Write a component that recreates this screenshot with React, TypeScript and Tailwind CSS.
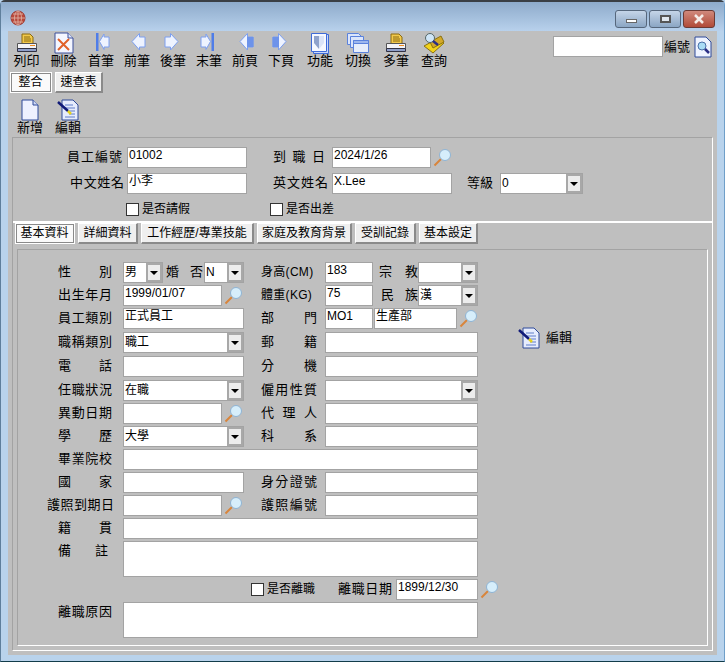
import type { ReactNode } from "react";

const Printer = () => (
  <svg width="24" height="22" viewBox="0 0 24 22">
    <path d="M7 2h8l3 3v7H7z" fill="#f2c94c" stroke="#8a6a10" />
    <path d="M9 5h6M9 7h7M9 9h7" stroke="#8a6a10" />
    <path d="M2.500 11.500h19v5h-19z" fill="#f4f4f8" stroke="#555" />
    <path d="M2.500 16.500h19v3h-19z" fill="#8f9fca" stroke="#334" />
    <path d="M15 13.500h5" stroke="#f08a1d" />
  </svg>
);

const Trash = () => (
  <svg width="20" height="22" viewBox="0 0 20 22">
    <path d="M1 1h13l5 5v15H1z" fill="#f4f6ff" stroke="#3a4f9a" />
    <path d="M14 1v5h5" fill="#dfe6fa" stroke="#3a4f9a" />
    <path d="M4 7l11 11M15 7L4 18" stroke="#e0602a" strokeWidth="2" />
  </svg>
);

const Arrow = ({ flip, bar, solid }: { flip?: boolean; bar?: boolean; solid?: boolean }) => (
  <svg width="18" height="22" viewBox="0 0 18 22" className={flip ? "-scale-x-100" : ""}>
    {bar && <rect x="4" y="1" width="2.500" height="18" fill="#4f7de8" />}
    {bar ? (
      <path d="M7.500 9.500L12 2V5H17V15H12V17.500Z" fill="#eef3ff" stroke="#7c9ff0" />
    ) : (
      <path d="M4 9.500L11.500 1.500V5H17V15H11.500V18Z" fill="#eef3ff" stroke="#7c9ff0" />
    )}
    {solid && <rect x="11" y="5" width="6.500" height="10" fill="#6d93ea" />}
  </svg>
);

const Func = () => (
  <svg width="20" height="22" viewBox="0 0 20 22">
    <path d="M3.500 2.500h15v19h-15z" fill="#c9d8fb" stroke="#3f6bd8" />
    <path d="M1.500 1.500h15v18h-15z" fill="#f6f8ff" stroke="#3f6bd8" />
    <path d="M4 4h5v13l-5-6z" fill="#8fa2cc" />
    <path d="M9 4h5v7l-5 6z" fill="#dbe4f8" />
  </svg>
);

const Switch = () => (
  <svg width="24" height="22" viewBox="0 0 24 22">
    <path d="M1.500 1.500h11l3 3v8h-14z" fill="#dbe5fb" stroke="#5b82dc" />
    <path d="M4.500 4.500h13v11h-13z" fill="#dbe5fb" stroke="#5b82dc" />
    <path d="M7.500 8.500h15v12h-15z" fill="#e6edfb" stroke="#5b82dc" />
    <path d="M7.500 8.500h15v3h-15z" fill="#9db7ee" stroke="#5b82dc" />
  </svg>
);

const Query = () => (
  <svg width="22" height="22" viewBox="0 0 22 22">
    <path d="M1 14L14 7l7 4-11 10z" fill="#f2d21a" stroke="#8a7210" />
    <path d="M7 10l11-6 3 6-11 6z" fill="#d4a92a" stroke="#8a7210" />
    <circle cx="7" cy="6" r="4.500" fill="#cfe6f8" stroke="#566" />
    <path d="M10 9l5 4" stroke="#2b2f86" strokeWidth="2.500" />
  </svg>
);

const NewDoc = () => (
  <svg width="18" height="22" viewBox="0 0 18 22">
    <path d="M1 1h11l5 5v15H1z" fill="#eef1ff" stroke="#2e4a9a" />
    <path d="M12 1v5h5" fill="#cfd8f4" stroke="#2e4a9a" />
  </svg>
);

const EditDoc = () => (
  <svg width="22" height="22" viewBox="0 0 22 22">
    <path d="M5 1h11l5 5v15H5z" fill="#e6ecfd" stroke="#2e4a9a" />
    <path d="M8 6h8M8 9h10M10 12h8M12 15h6M8 18h10" stroke="#5f7cc8" />
    <path d="M1 3l10 9" stroke="#101a78" strokeWidth="2.500" />
    <path d="M11 12l3 3" stroke="#e6d21a" strokeWidth="2.500" />
  </svg>
);

const Lens = () => (
  <svg width="18" height="20" viewBox="0 0 18 20" className="shrink-0">
    <path d="M1.500 18.500L8 12" stroke="#d9853b" strokeWidth="2" />
    <circle cx="12" cy="8" r="5.500" fill="#d6eefb" stroke="#8fb4d4" />
  </svg>
);

const SearchDoc = () => (
  <svg width="18" height="22" viewBox="0 0 18 22">
    <path d="M1 1h11l5 5v15H1z" fill="#eef3ff" stroke="#2e4a9a" />
    <circle cx="8" cy="10" r="4" fill="#a9dcf5" stroke="#4a6fa8" />
    <path d="M11 13l4 4" stroke="#2b2f86" strokeWidth="2.500" />
  </svg>
);

const Globe = () => (
  <svg width="16" height="16" viewBox="0 0 16 16">
    <circle cx="8" cy="8" r="7" fill="#b9483a" stroke="#a03a30" />
    <path d="M1 8h14M8 1v14M3 4h10M3 12h10" stroke="#dba698" />
    <ellipse cx="8" cy="8" rx="3.500" ry="7" fill="none" stroke="#dba698" />
  </svg>
);

const tools = [
  { label: "列印", icon: <Printer />, cls: "w-[37px]" },
  { label: "刪除", icon: <Trash />, cls: "w-[37px] mr-[1px]" },
  { label: "首筆", icon: <Arrow bar />, cls: "w-[36px]" },
  { label: "前筆", icon: <Arrow />, cls: "w-[36px]" },
  { label: "後筆", icon: <Arrow flip />, cls: "w-[36px]" },
  { label: "末筆", icon: <Arrow flip bar />, cls: "w-[36px]" },
  { label: "前頁", icon: <Arrow solid />, cls: "w-[36px]" },
  { label: "下頁", icon: <Arrow flip solid />, cls: "w-[36px] mr-[2px]" },
  { label: "功能", icon: <Func />, cls: "w-[38px]" },
  { label: "切換", icon: <Switch />, cls: "w-[38px]" },
  { label: "多筆", icon: <Printer />, cls: "w-[38px]" },
  { label: "查詢", icon: <Query />, cls: "w-[38px]" },
];

const Tool = ({ label, icon, className = "" }: { label: string; icon: ReactNode; className?: string }) => (
  <div className={"flex flex-col items-center " + className}>
    <div className="flex h-[22px] items-center justify-center">{icon}</div>
    <span className="text-[13px] leading-[14px] whitespace-nowrap">{label}</span>
  </div>
);

const Label = ({ text, className = "" }: { text: string; className?: string }) => (
  <span className={"flex shrink-0 justify-between text-[13px] leading-[20px] " + className}>
    {[...text].map((c, i) => (
      <span key={i}>{c}</span>
    ))}
  </span>
);

const Input = ({ value = "", className = "" }: { value?: string; className?: string }) => (
  <div className={"shrink-0 overflow-hidden border border-[#a3a3a3] bg-white pl-[1px] text-[12px] leading-[14px] whitespace-nowrap " + className}>
    {value}
  </div>
);

const Combo = ({ value = "", className = "" }: { value?: string; className?: string }) => (
  <div className={"flex shrink-0 border border-[#a3a3a3] bg-white " + className}>
    <span className="flex-1 overflow-hidden pl-[1px] text-[12px] leading-[18px]">{value}</span>
    <span className="flex w-[16px] items-center justify-center border-[2px] border-[#a8a8a8] bg-[#ececec]">
      <span className="border-x-[4px] border-t-[4px] border-x-transparent border-t-black" />
    </span>
  </div>
);

const Check = ({ label }: { label: string }) => (
  <div className="flex items-center gap-[3px]">
    <span className="h-[13px] w-[13px] border border-[#333] bg-white" />
    <span className="text-[12px] leading-[15px]">{label}</span>
  </div>
);

const Tab = ({ label, active, className = "" }: { label: string; active?: boolean; className?: string }) => (
  <div
    className={
      "flex h-[21px] items-center justify-center border-t border-l border-white border-r-2 border-b-2 text-[12px] whitespace-nowrap " +
      (active ? "border-r-white border-b-white bg-[#fafafa] outline outline-[#8a8a8a] -outline-offset-2 " : "border-r-[#8a8a8a] border-b-[#8a8a8a] bg-[#efefef] ") +
      className
    }
  >
    {label}
  </div>
);

// one form row: left part, then right part starting at x=261
const Row = ({ label, left, right, className = "" }: { label: string; left: ReactNode; right?: ReactNode; className?: string }) => (
  <div className={"flex h-[21px] " + className}>
    <div className="flex w-[214px] shrink-0">
      <div className="w-[76px] shrink-0 pl-[11px]">
        <Label text={label} className="w-[54px]" />
      </div>
      {left}
    </div>
    {right}
  </div>
);

const RightLabel = ({ text, className = "w-[56px]" }: { text: string; className?: string }) => (
  <div className="w-[64px] shrink-0">
    <Label text={text} className={className} />
  </div>
);

const App = () => {
  return (
    <div className="h-[662px] w-[725px] overflow-hidden bg-[#b9d3ec] font-['Liberation_Sans','Noto_Sans_CJK_TC',sans-serif] text-black">
      <div className="flex h-full flex-col rounded-t-[5px] border-t-2 border-r border-b border-l border-t-[#3a3f45] border-r-[#6f9fc9] border-b-[#123c4a] border-l-[#5f7f9c]">
        {/* title bar */}
        <div className="flex h-[29px] shrink-0 items-start justify-between bg-gradient-to-b from-[#8eabcb] to-[#b8d1ec] pt-[8px] pr-[9px] pl-[9px]">
          <Globe />
          <div className="flex gap-[2px]">
            <div className="flex h-[18px] w-[32px] items-center justify-center rounded-[3px] border border-[#56677c] bg-gradient-to-b from-[#c5d5e8] to-[#8ba6c4]">
              <span className="mt-[3px] h-[4px] w-[11px] border border-[#666] bg-white" />
            </div>
            <div className="flex h-[18px] w-[32px] items-center justify-center rounded-[3px] border border-[#56677c] bg-gradient-to-b from-[#c5d5e8] to-[#8ba6c4]">
              <span className="h-[8px] w-[11px] border-2 border-[#555] bg-[#dfe6ee]" />
            </div>
            <div className="flex h-[18px] w-[32px] items-center justify-center rounded-[3px] border border-[#6b3a34] bg-gradient-to-b from-[#d0897c] to-[#b04a38]">
              <svg width="12" height="10" viewBox="0 0 12 10">
                <path d="M2 1l8 8M10 1L2 9" stroke="#f4ece8" strokeWidth="2.500" />
              </svg>
            </div>
          </div>
        </div>

        {/* client area */}
        <div className="mx-[7px] flex flex-1 flex-col bg-[#bfbfbf]">
          <div className="flex h-[40px] shrink-0 items-start pt-[1px]">
            {tools.map((t) => (
              <Tool key={t.label} label={t.label} icon={t.icon} className={t.cls} />
            ))}
            <div className="ml-[100px] flex items-start pt-[4px]">
              <Input className="h-[21px] w-[110px]" />
              <span className="ml-[1px] text-[13px] leading-[22px]">編號</span>
              <span className="ml-[4px]">
                <SearchDoc />
              </span>
            </div>
          </div>

          <div className="flex h-[22px] shrink-0 items-center gap-[3px] pl-[2px]">
            <Tab label="整合" active className="w-[42px]" />
            <Tab label="速查表" className="w-[48px]" />
          </div>

          <div className="flex h-[44px] shrink-0 pt-[6px] pl-[2px]">
            <Tool label="新增" icon={<NewDoc />} className="w-[40px]" />
            <Tool label="編輯" icon={<EditDoc />} className="w-[36px]" />
          </div>

          {/* outer group */}
          <div className="mx-[4px] mb-[4px] flex flex-1 flex-col border-t border-r border-b border-l border-t-[#a3a3a3] border-r-white border-b-white border-l-[#a3a3a3]">
            <div className="flex h-[83px] shrink-0 flex-col pt-[9px]">
              <div className="flex h-[21px]">
                <Label text="員工編號" className="ml-[54px] w-[55px]" />
                <Input value="01002" className="ml-[5px] w-[120px]" />
                <Label text="到職日" className="ml-[26px] w-[52px]" />
                <Input value="2024/1/26" className="ml-[7px] w-[99px]" />
                <span className="ml-[2px]">
                  <Lens />
                </span>
              </div>
              <div className="mt-[5px] flex h-[21px]">
                <Label text="中文姓名" className="ml-[57px] w-[54px]" />
                <Input value="小李" className="ml-[3px] w-[120px]" />
                <Label text="英文姓名" className="ml-[26px] w-[55px]" />
                <Input value="X.Lee" className="ml-[4px] w-[120px]" />
                <Label text="等級" className="ml-[15px] w-[26px]" />
                <Combo value="0" className="ml-[7px] w-[83px]" />
              </div>
              <div className="mt-[8px] flex">
                <div className="ml-[113px] w-[144px]">
                  <Check label="是否請假" />
                </div>
                <Check label="是否出差" />
              </div>
            </div>
            <div className="h-[2px] shrink-0 bg-white" />
            <div className="flex h-[26px] shrink-0 items-start gap-[3px] pl-[2px]">
              <Tab label="基本資料" active className="w-[60px]" />
              <Tab label="詳細資料" className="w-[60px]" />
              <Tab label="工作經歷/專業技能" className="w-[113px]" />
              <Tab label="家庭及教育背景" className="w-[95px]" />
              <Tab label="受訓記錄" className="w-[61px]" />
              <Tab label="基本設定" className="w-[59px]" />
            </div>

            {/* inner group */}
            <div className="mx-[4px] mb-[4px] flex flex-1 border-t border-r border-b border-l border-t-[#a3a3a3] border-r-white border-b-white border-l-[#a3a3a3] pt-[12px] pl-[29px]">
              <div className="flex w-[462px] shrink-0 flex-col gap-[2px]">
                <Row
                  label="性別"
                  left={
                    <>
                      <Combo value="男" className="w-[40px]" />
                      <Label text="婚否" className="ml-[3px] w-[37px]" />
                      <Combo value="N" className="ml-[1px] w-[40px]" />
                    </>
                  }
                  right={
                    <>
                      <div className="w-[64px] shrink-0 text-[12px] leading-[20px] tracking-[0.3px]">身高(CM)</div>
                      <Input value="183" className="w-[48px]" />
                      <Label text="宗教" className="ml-[6px] w-[39px]" />
                      <Combo className="w-[60px]" />
                    </>
                  }
                />
                <Row
                  label="出生年月"
                  left={
                    <>
                      <Input value="1999/01/07" className="w-[99px]" />
                      <span className="ml-[2px]">
                        <Lens />
                      </span>
                    </>
                  }
                  right={
                    <>
                      <div className="w-[64px] shrink-0 text-[12px] leading-[20px] tracking-[0.3px]">體重(KG)</div>
                      <Input value="75" className="w-[48px]" />
                      <Label text="民族" className="ml-[8px] w-[37px]" />
                      <Combo value="漢" className="w-[60px]" />
                    </>
                  }
                />
                <Row
                  label="員工類別"
                  left={<Input value="正式員工" className="w-[121px]" />}
                  right={
                    <>
                      <RightLabel text="部門" />
                      <Input value="MO1" className="w-[48px]" />
                      <Input value="生產部" className="ml-[1px] w-[83px]" />
                      <span className="ml-[2px]">
                        <Lens />
                      </span>
                    </>
                  }
                />
                <Row
                  className="mt-[1px]"
                  label="職稱類別"
                  left={<Combo value="職工" className="w-[121px]" />}
                  right={
                    <>
                      <RightLabel text="郵籍" />
                      <Input className="w-[153px]" />
                    </>
                  }
                />
                <Row
                  className="mt-[1px]"
                  label="電話"
                  left={<Input className="w-[121px]" />}
                  right={
                    <>
                      <RightLabel text="分機" />
                      <Input className="w-[153px]" />
                    </>
                  }
                />
                <Row
                  className="mt-[1px]"
                  label="任職狀況"
                  left={<Combo value="在職" className="w-[121px]" />}
                  right={
                    <>
                      <RightLabel text="僱用性質" />
                      <Combo className="w-[153px]" />
                    </>
                  }
                />
                <Row
                  label="異動日期"
                  left={
                    <>
                      <Input className="w-[99px]" />
                      <span className="ml-[2px]">
                        <Lens />
                      </span>
                    </>
                  }
                  right={
                    <>
                      <RightLabel text="代理人" />
                      <Input className="w-[153px]" />
                    </>
                  }
                />
                <Row
                  label="學歷"
                  left={<Combo value="大學" className="w-[121px]" />}
                  right={
                    <>
                      <RightLabel text="科系" />
                      <Input className="w-[153px]" />
                    </>
                  }
                />
                <Row label="畢業院校" left={<Input className="w-[355px]" />} />
                <Row
                  label="國家"
                  left={<Input className="w-[121px]" />}
                  right={
                    <>
                      <RightLabel text="身分證號" />
                      <Input className="w-[153px]" />
                    </>
                  }
                />
                <div className="flex h-[21px]">
                  <div className="flex w-[214px] shrink-0">
                    <Label text="護照到期日" className="w-[67px]" />
                    <div className="w-[9px] shrink-0" />
                    <Input className="w-[99px]" />
                    <span className="ml-[2px]">
                      <Lens />
                    </span>
                  </div>
                  <RightLabel text="護照編號" />
                  <Input className="w-[153px]" />
                </div>
                <Row label="籍貫" left={<Input className="w-[355px]" />} />
                <div className="flex h-[36px]">
                  <div className="w-[76px] shrink-0 pl-[11px]">
                    <Label text="備註" className="w-[50px]" />
                  </div>
                  <Input className="w-[355px]" />
                </div>
                <div className="flex h-[21px] items-start pl-[204px]">
                  <div className="pt-[3px]">
                    <Check label="是否離職" />
                  </div>
                  <Label text="離職日期" className="ml-[23px] w-[54px]" />
                  <Input value="1899/12/30" className="ml-[4px] h-[21px] w-[82px]" />
                  <span className="ml-[2px]">
                    <Lens />
                  </span>
                </div>
                <div className="flex h-[36px]">
                  <div className="w-[76px] shrink-0 pl-[11px]">
                    <Label text="離職原因" className="w-[54px]" />
                  </div>
                  <Input className="w-[355px]" />
                </div>
              </div>
              <div className="mt-[65px] ml-[9px] flex h-[22px] items-center gap-[6px]">
                <EditDoc />
                <span className="text-[13px]">編輯</span>
              </div>
            </div>
          </div>
        </div>
        <div className="h-[6px] shrink-0" />
      </div>
    </div>
  );
};

export default App;
